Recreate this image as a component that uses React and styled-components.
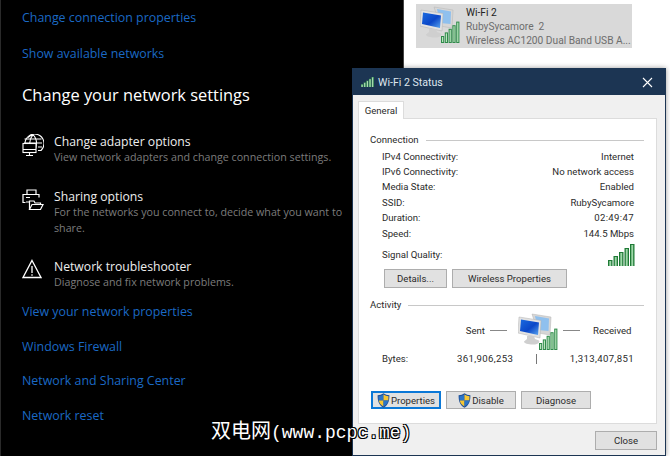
import React from 'react'
import styled, { createGlobalStyle } from 'styled-components'

const Global = createGlobalStyle`
	html, body { margin: 0; padding: 0; height: 100%; background: #000; overflow: hidden; }
	* { box-sizing: border-box; }
`

const settings = [
	{ icon: 'globe', title: 'Change adapter options', desc: 'View network adapters and change connection settings.' },
	{ icon: 'share', title: 'Sharing options', desc: 'For the networks you connect to, decide what you want to share.' },
	{ icon: 'warn', title: 'Network troubleshooter', desc: 'Diagnose and fix network problems.' },
]
const connection = [
	['IPv4 Connectivity:', 'Internet'],
	['IPv6 Connectivity:', 'No network access'],
	['Media State:', 'Enabled'],
	['SSID:', 'RubySycamore'],
	['Duration:', '02:49:47', true],
	['Speed:', '144.5 Mbps'],
]

const SettingIcon = ({ name }) => {
	if (name === 'globe') return <svg width="22" height="24" viewBox="0 0 22 24" fill="none" stroke="#fff" strokeWidth="1.1">
		<path d="M3 9.5a9.5 9.5 0 1 1 16 7h-3" />
		<path d="M6 3.5C7.5 2 9 1 11 .6c2.5 2.5 3.5 5.5 3.5 8.5 0 2.4-.5 5-1.5 7.5M11 .6C9 3 8 5 7.8 8.5M2.5 5h17M2 9h18M16 13h4" />
		<rect x="1" y="9.5" width="13" height="9" fill="#000" />
		<path d="M1 15.5h13M7.5 18.5v2.500M4 21.5h7" />
	</svg>
	if (name === 'share') return <svg width="22" height="22" viewBox="0 0 22 22" fill="none" stroke="#fff" strokeWidth="1.2">
		<path d="M5 5V1h9v4M3.5 13.5H1V5.5h16v3" />
		<path d="M4 8.5h4M4 13h3" />
		<path d="M7.5 20.5v-8.500h4.500l1 2h5.500v2" />
		<path d="M7.5 20.5l2.500-5h11l-2.500 5z" fill="#000" />
	</svg>
	return <svg width="20" height="20" viewBox="0 0 20 20" fill="none" stroke="#fff" strokeWidth="1.3">
		<path d="M10 1.500 19 18.500H1z" strokeLinejoin="miter" />
		<path d="M10 7v7M10 15.200v1.600" />
	</svg>
}

const SignalBars = ({ w = 27, h = 22, dark }) => <svg width={w} height={h} viewBox="0 0 27 22" preserveAspectRatio="none">
	{[0, 1, 2, 3, 4].map(i => {
		const top = 16 - i * 4
		return <g key={i}>
			<rect x={i * 5.5} y={top} width="4.5" height={22 - top} fill={dark ? '#1f7a36' : '#3f9a58'} />
			<rect x={i * 5.5 + 1.3} y={top + 1} width="1.9" height={21 - top} fill={dark ? '#9ed8a8' : '#c4e8c6'} />
		</g>
	})}
</svg>

const NetworkIcon = ({ id }) => <NetSvg viewBox="0 0 40 38">
	<defs>
		<linearGradient id={id} x1="0" y1="0" x2="1" y2="1">
			<stop offset="0" stopColor="#1b6be0" />
			<stop offset="0.55" stopColor="#0b47c8" />
			<stop offset="1" stopColor="#5aa6f0" />
		</linearGradient>
	</defs>
	<path d="M14 1 33 4 32 22 20 20z" fill="#d6d6d6" stroke="#b5b5b5" strokeWidth=".5" />
	<path d="M17 3 31 5.500 30.500 18 20 17z" fill="#8fc0ee" />
	<path d="M1 4 23 7.500 22 25 0 20z" fill="#e2e2e2" stroke="#b0b0b0" strokeWidth=".5" />
	<path d="M3 6.500 21 9.500 20 22 2 18z" fill={`url(#${id})`} />
	<path d="M9 23h7l1 3 4 1.500c1 2-1 4-6 4s-9-1-9-3l3-2.500z" fill="#cfcfcf" />
	{[0, 1, 2, 3, 4].map(i => {
		const top = 30 - i * 3.6
		return <g key={i}>
			<rect x={21 + i * 3.8} y={top} width="3.2" height={37 - top} fill="#2f8a4a" />
			<rect x={22 + i * 3.8} y={top + 1} width="1.2" height={35 - top} fill="#b9e6bd" />
		</g>
	})}
</NetSvg>

const Shield = () => <ShieldSvg viewBox="0 0 13 15">
	<path d="M6.500.3C4.800 1.600 2.800 2.200.6 2.300c0 5.500 1 10 5.900 12.400 4.900-2.400 5.900-6.900 5.900-12.400C10.200 2.200 8.200 1.600 6.500.3z" fill="#1f4f96" />
	<path d="M6.500 1.500v6H1.700C1.600 6 1.500 4.800 1.500 3.200 3.200 3 4.900 2.500 6.500 1.500z" fill="#2a74c8" />
	<path d="M6.500 1.500c1.600 1 3.300 1.500 5 1.700 0 1.600-.1 2.800-.2 4.300H6.500z" fill="#f6c633" />
	<path d="M6.500 7.500v6c-2.600-1.500-4.200-3.300-4.800-6z" fill="#f6c633" />
	<path d="M6.500 7.500h4.800c-.6 2.700-2.200 4.500-4.800 6z" fill="#2a74c8" />
</ShieldSvg>

export default function App() {
	return <Screen>
		<Global />
		<SettingsPane>
			<TopLink>Change connection properties</TopLink>
			<TopLink>Show available networks</TopLink>
			<Heading>Change your network settings</Heading>
			{settings.map(s => <Setting key={s.title}>
				<IconSlot><SettingIcon name={s.icon} /></IconSlot>
				<div>
					<SettingTitle>{s.title}</SettingTitle>
					<SettingDesc>{s.desc}</SettingDesc>
				</div>
			</Setting>)}
			<BottomLinks>
				<TopLink>View your network properties</TopLink>
				<TopLink>Windows Firewall</TopLink>
				<TopLink>Network and Sharing Center</TopLink>
				<TopLink>Network reset</TopLink>
			</BottomLinks>
		</SettingsPane>
		<ConnectionsPane>
			<Adapter>
				<NetworkIcon id="scrA" />
				<AdapterText>
					<AdapterName>Wi-Fi 2</AdapterName>
					<div>RubySycamore&nbsp; 2</div>
					<div>Wireless AC1200 Dual Band USB A...</div>
				</AdapterText>
			</Adapter>
		</ConnectionsPane>
		<Dialog>
			<TitleBar>
				<SignalBars w={13} h={10} />
				<TitleText>Wi-Fi 2 Status</TitleText>
				<CloseX>
					<svg width="11" height="11" viewBox="0 0 11 11" stroke="#fff" strokeWidth="1.1"><path d="M1 1l9 9M10 1l-9 9" /></svg>
				</CloseX>
			</TitleBar>
			<DialogBody>
				<Tab>General</Tab>
				<TabPanel>
					<GroupHead>Connection<Rule /></GroupHead>
					<InfoGrid>
						{connection.map(([k, v, num]) => <InfoRow key={k}><span>{k}</span><InfoValue $num={num}>{v}</InfoValue></InfoRow>)}
					</InfoGrid>
					<SignalRow>
						<span>Signal Quality:</span>
						<SignalBars dark />
					</SignalRow>
					<ButtonRow>
						<Btn $w={63}>Details...</Btn>
						<Btn $w={115}>Wireless Properties</Btn>
					</ButtonRow>
					<ActivityHead>Activity<Rule /></ActivityHead>
					<ActivityGrid>
						<SentCell>Sent<Dash /></SentCell>
						<IconCell><NetworkIcon id="scrB" /></IconCell>
						<ReceivedCell><Dash />Received</ReceivedCell>
						<BytesLabel>Bytes:</BytesLabel>
						<BytesValue>361,906,253</BytesValue>
						<Tick />
						<BytesValue>1,313,407,851</BytesValue>
					</ActivityGrid>
					<ActionRow>
						<Btn $w={70} $h={18} $focus><Shield />Properties</Btn>
						<Btn $w={70} $h={18}><Shield />Disable</Btn>
						<Btn $w={70} $h={18}>Diagnose</Btn>
					</ActionRow>
				</TabPanel>
				<DialogFoot><Btn $w={62}>Close</Btn></DialogFoot>
			</DialogBody>
		</Dialog>
		<Watermark><WatermarkCjk>双电网</WatermarkCjk>(www.pcpc.me)</Watermark>
	</Screen>
}

// --------------------------------------------------------
const Screen = styled.div`
	position: relative;
	width: 670px;
	height: 456px;
	overflow: hidden;
	display: grid;
	grid-template-columns: 403px 1fr;
	background: #000;
`
// --------------------------------------------------------
const SettingsPane = styled.div`
	background: #000;
	border-left: 1px solid #2a2a2a;
	padding: 9px 0 0 21px;
	font-family: "Open Sans", "Noto Sans", sans-serif;
`
const TopLink = styled.div`
	color: #1b69c4;
	font-size: 12.4px;
	line-height: 18px;
	margin-bottom: 17.5px;
`
const Heading = styled.div`
	color: #fff;
	font-size: 16.4px;
	line-height: 24px;
	margin: 20.5px 0 26px;
`
const Setting = styled.div`
	display: flex;
	padding-bottom: 22px;
`
const IconSlot = styled.div`
	width: 32px;
	padding-top: 1px;
	flex: none;
`
const SettingTitle = styled.div`
	color: #eee;
	font-size: 12.2px;
	line-height: 17px;
`
const SettingDesc = styled.div`
	color: #7c7c7c;
	font-size: 10.7px;
	line-height: 15.8px;
	width: 300px;
`
const BottomLinks = styled.div`
	display: flex;
	flex-direction: column;
	margin-top: -10px;
	& > div { margin-bottom: 16.5px; }
`
// --------------------------------------------------------
const ConnectionsPane = styled.div`
	background: #fff;
	box-shadow: -2px 0 3px rgba(0, 0, 0, .3);
	border-left: 1px solid #444;
	padding: 4px 0 0 12px;
	font-family: Roboto, "Open Sans", sans-serif;
`
const Adapter = styled.div`
	width: 216px;
	height: 44px;
	background: #d9d9d9;
	display: flex;
	gap: 6px;
	padding: 2px 0 0 4px;
	overflow: hidden;
`
const NetSvg = styled.svg`
	width: 40px;
	height: 38px;
	flex: none;
`
const ShieldSvg = styled.svg`
	width: 13px;
	height: 15px;
	flex: none;
`
const AdapterText = styled.div`
	color: #6d6d6d;
	font-size: 10.2px;
	line-height: 14px;
	white-space: nowrap;
`
const AdapterName = styled.div`
	color: #222;
`
// --------------------------------------------------------
const Dialog = styled.div`
	position: absolute;
	left: 352px;
	top: 68px;
	width: 314px;
	height: 388px;
	background: #f0f0f0;
	border: 1px solid #1c3553;
	box-shadow: 0 0 5px rgba(0, 0, 0, .4);
	font-family: Roboto, "Open Sans", sans-serif;
	font-size: 9.6px;
	color: #2b2b2b;
	display: flex;
	flex-direction: column;
`
const TitleBar = styled.div`
	height: 26px;
	background: #1c3553;
	display: flex;
	align-items: center;
	padding: 0 8px;
	gap: 4px;
	flex: none;
`
const TitleText = styled.span`
	color: #dfe6ee;
	font-size: 10.6px;
`
const CloseX = styled.span`
	margin-left: auto;
	margin-right: 4px;
	display: flex;
`
const DialogBody = styled.div`
	flex: 1;
	padding: 6px 8px 0 5px;
	display: flex;
	flex-direction: column;
`
const Tab = styled.div`
	width: 46px;
	height: 18px;
	background: #fff;
	border: 1px solid #dcdcdc;
	border-bottom: 0;
	text-align: center;
	line-height: 18px;
	position: relative;
	z-index: 1;
	margin-bottom: -1px;
`
const TabPanel = styled.div`
	background: #fff;
	border: 1px solid #dcdcdc;
	height: 306px;
	padding: 14px 12px 0 11px;
`
const GroupHead = styled.div`
	display: flex;
	align-items: center;
	gap: 7px;
	line-height: 14px;
`
const ActivityHead = styled(GroupHead)`
	margin-top: 10px;
`
const Rule = styled.span`
	flex: 1;
	height: 1px;
	background: #c8c8c8;
`
const InfoGrid = styled.div`
	padding: 1.5px 10px 0 12px;
`
const InfoRow = styled.div`
	display: flex;
	justify-content: space-between;
	line-height: 15.4px;
`
const InfoValue = styled.span`
	letter-spacing: ${p => p.$num ? '.35px' : '0'};
`
const SignalRow = styled.div`
	display: flex;
	justify-content: space-between;
	align-items: center;
	padding: 0 9px 0 12px;
	height: 27.5px;
`
const ButtonRow = styled.div`
	display: flex;
	gap: 5px;
	padding: 1px 0 0 14px;
`
const Btn = styled.div`
	width: ${p => p.$w}px;
	height: ${p => p.$h || 19}px;
	background: #e1e1e1;
	border: ${p => p.$focus ? '2px solid #0b78d7' : '1px solid #adadad'};
	display: flex;
	align-items: center;
	justify-content: center;
	gap: 1px;
	line-height: 1;
`
const ActivityGrid = styled.div`
	display: grid;
	grid-template-columns: 75px 53px 52px 1fr;
	grid-template-rows: 38px 16px;
	padding: 1px 10px 0 12px;
`
const SentCell = styled.div`
	grid-column: 1 / 3;
	display: flex;
	justify-content: flex-end;
	align-items: center;
	gap: 5px;
	padding: 0 3px 4px 0;
	white-space: nowrap;
`
const IconCell = styled.div`
	padding-left: 8px;
	white-space: nowrap;
`
const ReceivedCell = styled.div`
	display: flex;
	align-items: center;
	gap: 13px;
	padding: 0 0 4px 1px;
	white-space: nowrap;
`
const Dash = styled.span`
	width: 17px;
	height: 1px;
	background: #888;
	flex: none;
`
const BytesLabel = styled.div`
	line-height: 16px;
	grid-column: 1;
`
const BytesValue = styled.div`
	text-align: right;
	white-space: nowrap;
	line-height: 16px;
	letter-spacing: .35px;
`
const Tick = styled.div`
	width: 1px;
	height: 10px;
	background: #777;
	justify-self: center;
	align-self: center;
`
const ActionRow = styled.div`
	display: flex;
	gap: 5px;
	padding: 24px 0 0 1px;
`
const DialogFoot = styled.div`
	display: flex;
	justify-content: flex-end;
	padding: 7px 0 0 0;
`
// --------------------------------------------------------
const Watermark = styled.div`
	position: absolute;
	left: 211px;
	top: 416px;
	color: #fff;
	font-family: "Liberation Mono", "Noto Sans CJK SC", monospace;
	font-size: 18px;
	line-height: 27px;
	white-space: nowrap;
	text-shadow: -1px -1px 0 #000, 1px -1px 0 #000, -1px 1px 0 #000, 1px 1px 0 #000;
`
const WatermarkCjk = styled.span`
	font-family: "Noto Sans CJK SC", sans-serif;
	font-size: 20px;
`
